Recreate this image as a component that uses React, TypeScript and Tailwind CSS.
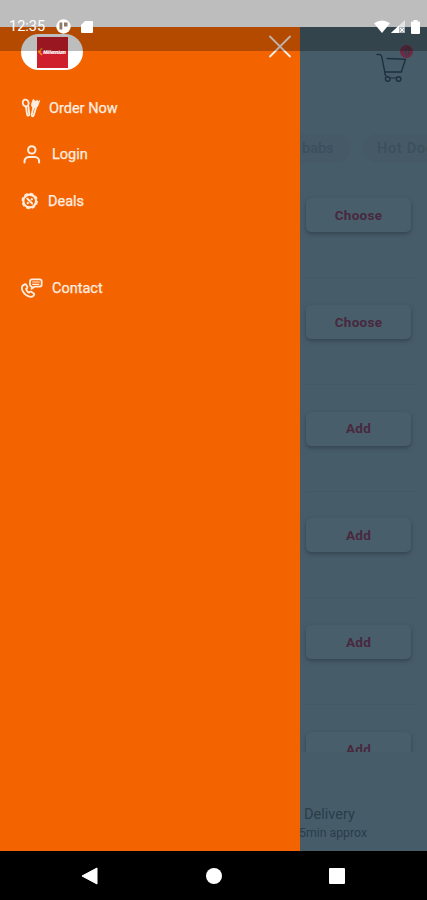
import type { ReactNode } from "react";

const rows = ["Choose", "Choose", "Add", "Add", "Add", "Add"];

function MenuItem({ icon, label, className }: { icon: ReactNode; label: string; className: string }) {
    return (
        <a className={`flex h-6 items-center text-[14.5px] leading-6 text-[#ffeee0] ${className}`}>
            {icon}
            <span className="whitespace-nowrap pt-px [-webkit-text-stroke:0.25px]">{label}</span>
        </a>
    );
}

function CutleryIcon() {
    return (
        <svg width="20" height="20" viewBox="0 0 20 20" fill="none" stroke="currentColor" strokeWidth="1.8" strokeLinecap="round" strokeLinejoin="round">
            <ellipse cx="4.7" cy="5" rx="2.9" ry="3.5" transform="rotate(-18 4.7 5)" />
            <path d="M4.9 8.5 6.1 16.500c.3 1.700 2.200 1.500 2.200-.2L7.300 8" />
            <path d="M12.300 9.500 10.700 16.800c-.3 1.700 1.500 2 2 .4l2.200-7.300" />
            <path d="M12.200 1.500 10.500 6c-.5 2.300 1 3.700 2.600 4.100 1.900.3 3.300-1 3.900-2.700l1.700-4.900-1.800 1.600-.3-1.800-2.200 1Z" fill="currentColor" strokeWidth=".8" />
        </svg>
    );
}

function UserIcon() {
    return (
        <svg width="18" height="20" viewBox="0 0 18 20" fill="none" stroke="currentColor" strokeWidth="2" strokeLinecap="round">
            <circle cx="8.8" cy="5.9" r="3.7" />
            <path d="M1.5 18.500v-1.200a4.300 4.300 0 0 1 4.300-4.300h6a4.300 4.300 0 0 1 4.300 4.300v1.200" />
        </svg>
    );
}

function DealsIcon() {
    return (
        <svg width="18" height="18" viewBox="0 0 18 18" fill="none" stroke="currentColor" strokeLinecap="round">
            <circle cx="8.7" cy="9" r="6.4" strokeWidth="2.200" />
            <circle cx="8.7" cy="9" r="7.6" strokeWidth="1.200" strokeDasharray="3.600 2.370" strokeLinecap="butt" />
            <path d="m6.200 6.500 5 5" strokeWidth="1.800" />
            <circle cx="10.7" cy="7.2" r=".9" fill="currentColor" strokeWidth=".5" />
            <circle cx="6.8" cy="11" r=".9" fill="currentColor" strokeWidth=".5" />
        </svg>
    );
}

function ContactIcon() {
    return (
        <svg width="22" height="21" viewBox="0 0 22 21" fill="none" stroke="currentColor" strokeWidth="1.8" strokeLinejoin="round" strokeLinecap="round">
            <path d="M11.200 1.400h7.400c1.300 0 2.100.8 2.100 2v3.200c0 1.300-.8 2.100-2.100 2.100h-5.200l-2.800 2.200.2-2.300C9.400 8.300 9 7.600 9 6.500V3.600c0-1.400.9-2.200 2.200-2.200Z" />
            <path d="M11.700 4h6.600M11.700 6.300h6.200" strokeWidth="1.2" />
            <path d="M3.400 6.400 1.900 7.500C.7 8.500.7 10.700 1.500 12.700c1.600 3.500 4.800 5.700 8.200 6.100 1.600.1 2.500-.5 3.200-1.500.6-.8.4-1.500-.4-2.100l-2.300-1.400c-.8-.5-1.300-.2-1.800.4l-.5.500c-1.400-.8-2.400-2-2.900-3.700l.8-.6c.6-.5.7-1 .4-1.700L5.100 6.800c-.4-.8-1-.9-1.700-.4Z" />
        </svg>
    );
}

function CartIcon() {
    return (
        <svg width="32" height="30" viewBox="0 0 32 30" fill="none" stroke="#1d3040" strokeWidth="1.4" strokeLinecap="round" strokeLinejoin="round">
            <path d="M1 1.500h2.500c1.200 0 1.800.5 2.100 1.700L8.800 19h16.500M11 5.500l18.500.8-4.200 12.700M8.800 19c-.2 2 .2 3.200 1.400 4" />
            <circle cx="11.7" cy="26" r="2.3" />
            <circle cx="22.6" cy="26" r="2.3" />
            <path d="M14 25h6.500" strokeWidth="1" />
        </svg>
    );
}

function Drawer() {
    return (
        <aside className="flex h-full w-[300px] shrink-0 flex-col bg-[#f36400]">
            <div className="flex items-start justify-between pl-[21px] pr-2 pt-[7px]">
                <div className="flex h-9 w-[62px] items-center justify-center rounded-[18px] bg-white">
                    <div className="flex h-[31px] w-[31px] items-center justify-center bg-[#cf1f2c]">
                        <svg width="5" height="8" viewBox="0 0 5 8" fill="none" stroke="#f5921e" strokeWidth="1.5">
                            <path d="M4 0 1 4l3 3M0 3h3" />
                        </svg>
                        <span className="text-[5px] font-black italic leading-none tracking-[-0.2px] text-white">Millennium</span>
                    </div>
                </div>
                <svg width="24" height="24" viewBox="0 0 24 24" fill="none" stroke="#fff0e6" strokeWidth="1.8" strokeLinecap="round">
                    <path d="m2 2.500 20 20M22 2.500l-20 20" />
                </svg>
            </div>
            <nav className="flex flex-col pl-[21px] pt-[26px]">
                <MenuItem icon={<CutleryIcon />} label="Order Now" className="gap-2" />
                <MenuItem icon={<UserIcon />} label="Login" className="mt-[22px] gap-[11px] pl-[2px]" />
                <MenuItem icon={<DealsIcon />} label="Deals" className="mt-[23px] gap-[9px]" />
                <MenuItem icon={<ContactIcon />} label="Contact" className="mt-[63px] gap-[9px]" />
            </nav>
        </aside>
    );
}

function MenuPage() {
    return (
        <main className="flex h-full w-[127px] flex-col overflow-hidden bg-[#475c69]">
            <header className="flex h-[81px] justify-end pr-[19px] pt-[26px]">
                <div className="relative h-[30px] w-8">
                    <CartIcon />
                    <span className="absolute -top-[8px] left-[24px] flex h-[13px] w-[13px] items-center justify-center rounded-full bg-[#6e2a43] text-[10px] font-bold leading-none text-[#2f4352]">0</span>
                </div>
            </header>
            <div className="flex h-[60px] items-start gap-[13px] pt-[26px] text-[14.5px] font-medium text-[#3b4f5d]">
                <span className="flex h-[29px] w-[50px] shrink-0 items-center rounded-r-full bg-[#455a66] pl-[2px]">babs</span>
                <span className="flex h-[29px] w-[90px] shrink-0 items-center whitespace-nowrap rounded-full bg-[#455a66] pl-[14px] tracking-[0.7px]">Hot Dogs</span>
            </div>
            <section className="h-[584px] overflow-hidden pl-[6px] pr-4">
                {rows.map((label, i) => (
                    <div key={i} className="h-[106.8px] pt-[30px]">
                        <button className="block h-[34px] w-[105px] rounded-[5px] bg-[#485e6b] text-[13.5px] font-bold tracking-[0.3px] text-[#48283f] shadow-[0_2px_4px_#32444f]">
                            {label}
                        </button>
                        <div className="mt-[45px] h-px w-[110px] bg-[#435865]" />
                    </div>
                ))}
            </section>
            <footer className="pt-[53px] text-[#293d4b]">
                <p className="pl-[4px] text-[14.5px] leading-[19px]">Delivery</p>
                <p className="-ml-px whitespace-nowrap text-[12.3px] leading-[18px]">5min approx</p>
            </footer>
        </main>
    );
}

function StatusBar() {
    return (
        <div className="absolute inset-x-0 top-0 flex h-[51px] items-start justify-between bg-black/26 pl-[9px] pr-[7px] pt-[19px] text-white">
            <div className="flex h-[15px] items-center">
                <span className="w-[37px] pt-[2px] text-[14.5px] leading-none">12:35</span>
                <svg className="ml-[10px]" width="15" height="15" viewBox="0 0 15 15">
                    <circle cx="7.5" cy="7.5" r="7.2" fill="white" />
                    <path d="M3.500 10.500V3.500h2.800v7ZM8 3.500h3.500v4H8Z" fill="#8d7767" />
                </svg>
                <svg className="ml-[10px]" width="12" height="14" viewBox="0 0 12 14" fill="white">
                    <path d="M4 1h7q1 0 1 1v10q0 1-1 1H1q-1 0-1-1V5Z" />
                </svg>
            </div>
            <div className="flex h-[15px] items-center">
                <svg width="16" height="14" viewBox="0 0 16 14" fill="white">
                    <path d="M0 3.200Q8-2 16 3.200L8 13Z" />
                </svg>
                <svg className="ml-[1px]" width="14" height="14" viewBox="0 0 14 14" fill="white">
                    <path d="M0 13 14 0v13Z" opacity=".6" />
                    <path d="M0 13 8 5.500V13Z" />
                    <path d="m9 8 4 4m0-4-4 4" stroke="white" />
                </svg>
                <svg className="ml-[6px]" width="9" height="14" viewBox="0 0 9 14" fill="white">
                    <path d="M2.500 0h4v1.500H8q1 0 1 1V13q0 1-1 1H1q-1 0-1-1V2.500q0-1 1-1h1.500Z" />
                </svg>
            </div>
        </div>
    );
}

export default function App() {
    return (
        <div className="relative flex h-[900px] w-[427px] flex-col overflow-hidden bg-white font-[Roboto,sans-serif]">
            <div className="flex h-[851px] pt-[27px]">
                <Drawer />
                <MenuPage />
            </div>
            <div className="flex h-[49px] items-center justify-between bg-black pl-[81px] pr-[82px]">
                <svg width="17" height="18" viewBox="0 0 17 18" fill="white">
                    <path d="M16 1v16L1 9Z" stroke="white" strokeLinejoin="round" />
                </svg>
                <div className="ml-px h-4 w-4 rounded-full bg-white" />
                <div className="h-4 w-4 rounded-[1px] bg-white" />
            </div>
            <StatusBar />
        </div>
    );
}
